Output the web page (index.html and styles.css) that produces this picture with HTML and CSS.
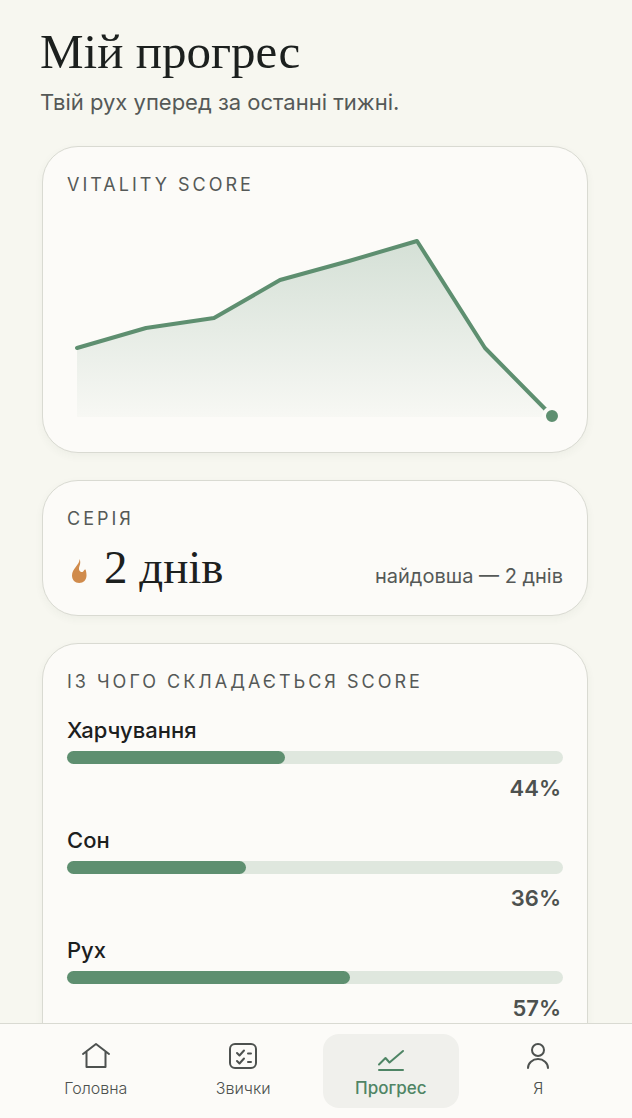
FILE: index.html
```html
<!DOCTYPE html>
<html lang="uk">
<head>
  <meta charset="UTF-8" />
  <meta name="viewport" content="width=device-width, initial-scale=1.0" />
  <title>Мій прогрес</title>
  <link rel="stylesheet" href="styles.css">
</head>
<body>
  <main class="content">
    <header class="header">
      <h1>Мій прогрес</h1>
      <p>Твій рух уперед за останні тижні.</p>
    </header>

    <section class="card">
      <h2>VITALITY SCORE</h2>
      <svg class="chart" viewBox="68 216 496 212" role="img" aria-label="Vitality score">
        <defs>
          <linearGradient id="area" x1="0" y1="0" x2="0" y2="1">
            <stop offset="0" stop-color="#5e8f70" stop-opacity="0.25" />
            <stop offset="1" stop-color="#5e8f70" stop-opacity="0.03" />
          </linearGradient>
        </defs>
        <path d="M78 348 L147 328 L215 318 L281 280 L350 261 L418 241 L486 348 L553 416 V417 H78 Z" fill="url(#area)" />
        <path class="chart-line" d="M78 348 L147 328 L215 318 L281 280 L350 261 L418 241 L486 348 L553 416" />
        <circle class="chart-dot" cx="553" cy="416" r="8" />
      </svg>
    </section>

    <section class="card">
      <h2>СЕРІЯ</h2>
      <div class="streak">
        <svg class="flame" viewBox="0 0 16 24" width="16" height="24" aria-hidden="true">
          <path d="M8.500 0 C9 5.500 1 9.500 1 16.500 C1 21 4 24 8.200 24 C12.500 24 15.500 21 15.500 16.500 C15.500 14 15.200 12 14.500 10.500 C12.500 10.500 13 13 11 13 C8.500 13 7.200 10.500 8.500 7 C9.500 4.500 9.500 2 8.500 0 Z" fill="#d08b4c" />
        </svg>
        <span class="streak-value">2 днів</span>
        <span class="streak-best">найдовша — 2 днів</span>
      </div>
    </section>

    <section class="card">
      <h2>ІЗ ЧОГО СКЛАДАЄТЬСЯ SCORE</h2>
      <div class="metrics">
        <div class="metric">
          <div class="metric-name">Харчування</div>
          <div class="bar"><div class="bar-fill" style="width: 44%"></div></div>
          <div class="metric-value">44%</div>
        </div>
        <div class="metric">
          <div class="metric-name">Сон</div>
          <div class="bar"><div class="bar-fill" style="width: 36%"></div></div>
          <div class="metric-value">36%</div>
        </div>
        <div class="metric">
          <div class="metric-name">Рух</div>
          <div class="bar"><div class="bar-fill" style="width: 57%"></div></div>
          <div class="metric-value">57%</div>
        </div>
      </div>
    </section>
  </main>

  <nav class="tabs">
    <a class="tab" href="#home">
      <svg viewBox="0 0 28 28" aria-hidden="true">
        <path d="M1 12 L14 2 L27 12 M4.500 10 V25 H23.500 V10" />
      </svg>
      Головна
    </a>
    <a class="tab" href="#habits">
      <svg viewBox="0 0 28 28" aria-hidden="true">
        <rect x="1" y="2" width="26" height="24" rx="5" />
        <path d="M8 11 L10.500 13.500 L15 8.500 M8 19 L10.500 21.500 L15 16.500 M19 11.500 H22 M19 20 H22" />
      </svg>
      Звички
    </a>
    <a class="tab active" href="#progress" aria-current="page">
      <svg viewBox="0 0 28 28" aria-hidden="true">
        <path d="M2 22.500 L8.500 16 L12.500 20.500 L26 9 M2 28 H26" />
      </svg>
      Прогрес
    </a>
    <a class="tab" href="#me">
      <svg viewBox="0 0 28 28" aria-hidden="true">
        <circle cx="14" cy="8" r="6" />
        <path d="M4 26 A10 9 0 0 1 24 26" />
      </svg>
      Я
    </a>
  </nav>
</body>
</html>
```
FILE: styles.css
```css
* {
  box-sizing: border-box;
}

body {
  margin: 0;
  height: 100vh;
  display: flex;
  flex-direction: column;
  font-family: Inter, "Noto Sans", sans-serif;
  background-color: #f7f7f0;
  color: #1c201e;
}

.content {
  flex: 1;
  min-height: 0;
  overflow-y: auto;
  scrollbar-width: none;
  padding: 24px 44px 24px 42px;
}

.header {
  margin: 0 -2px 30px;
}

h1 {
  margin: 0;
  font-family: "Liberation Serif", serif;
  font-size: 49px;
  font-weight: normal;
  line-height: 56px;
}

.header p {
  margin: 8px 0 0;
  font-size: 22px;
  line-height: 28px;
  color: #555957;
}

.card {
  background-color: #fcfbf8;
  padding: 24px;
  border: 1px solid #d9dad2;
  border-radius: 36px;
  margin-bottom: 27px;
  box-shadow: 0 3px 8px rgba(60, 70, 50, 0.05);
}

h2 {
  margin: 0;
  font-size: 18px;
  font-weight: normal;
  line-height: 28px;
  letter-spacing: 3px;
  color: #555957;
}

.chart {
  display: block;
  width: 100%;
  margin-top: 17px;
}

.chart-line {
  fill: none;
  stroke: #5e8f70;
  stroke-width: 4;
  stroke-linecap: round;
  stroke-linejoin: round;
}

.chart-dot {
  fill: #5e8f70;
  stroke: #fcfbf8;
  stroke-width: 4;
}

.streak {
  display: flex;
  align-items: baseline;
  margin-bottom: -4px;
  padding: 6px 0 0 4px;
}

.flame {
  flex: none;
}

.streak-value {
  margin-left: 17px;
  font-family: "Liberation Serif", serif;
  font-size: 47px;
  line-height: 56px;
}

.streak-best {
  margin-left: auto;
  font-size: 20px;
  color: #555957;
}

.metrics {
  display: flex;
  flex-direction: column;
  gap: 24px;
  margin-top: 20px;
  padding-bottom: 24px;
}

.metric-name {
  font-size: 22px;
  font-weight: 500;
  line-height: 28px;
}

.bar {
  height: 13px;
  margin: 7px 0 10px;
  border-radius: 8px;
  background-color: #dfe7de;
}

.bar-fill {
  height: 100%;
  border-radius: 8px;
  background-color: #5e8f70;
}

.metric-value {
  padding-right: 2px;
  font-size: 22px;
  font-weight: 600;
  line-height: 28px;
  text-align: right;
  color: #4d514f;
}

.tabs {
  display: flex;
  gap: 12px;
  padding: 10px 26px 10px 28px;
  border-top: 1px solid #d9dad2;
  background-color: #fcfbf8;
}

.tab {
  flex: 1;
  display: flex;
  flex-direction: column;
  align-items: center;
  gap: 6px;
  padding: 8px 0;
  border-radius: 16px;
  font-size: 16px;
  font-weight: 300;
  line-height: 24px;
  color: #4d514f;
  text-decoration: none;
}

.tab svg {
  width: 28px;
  height: 28px;
  overflow: visible;
  fill: none;
  stroke: currentColor;
  stroke-width: 2;
  stroke-linecap: round;
  stroke-linejoin: round;
}

.tab.active {
  background-color: #f0f0ec;
  color: #4f8565;
  font-size: 17px;
  font-weight: 500;
}
```
